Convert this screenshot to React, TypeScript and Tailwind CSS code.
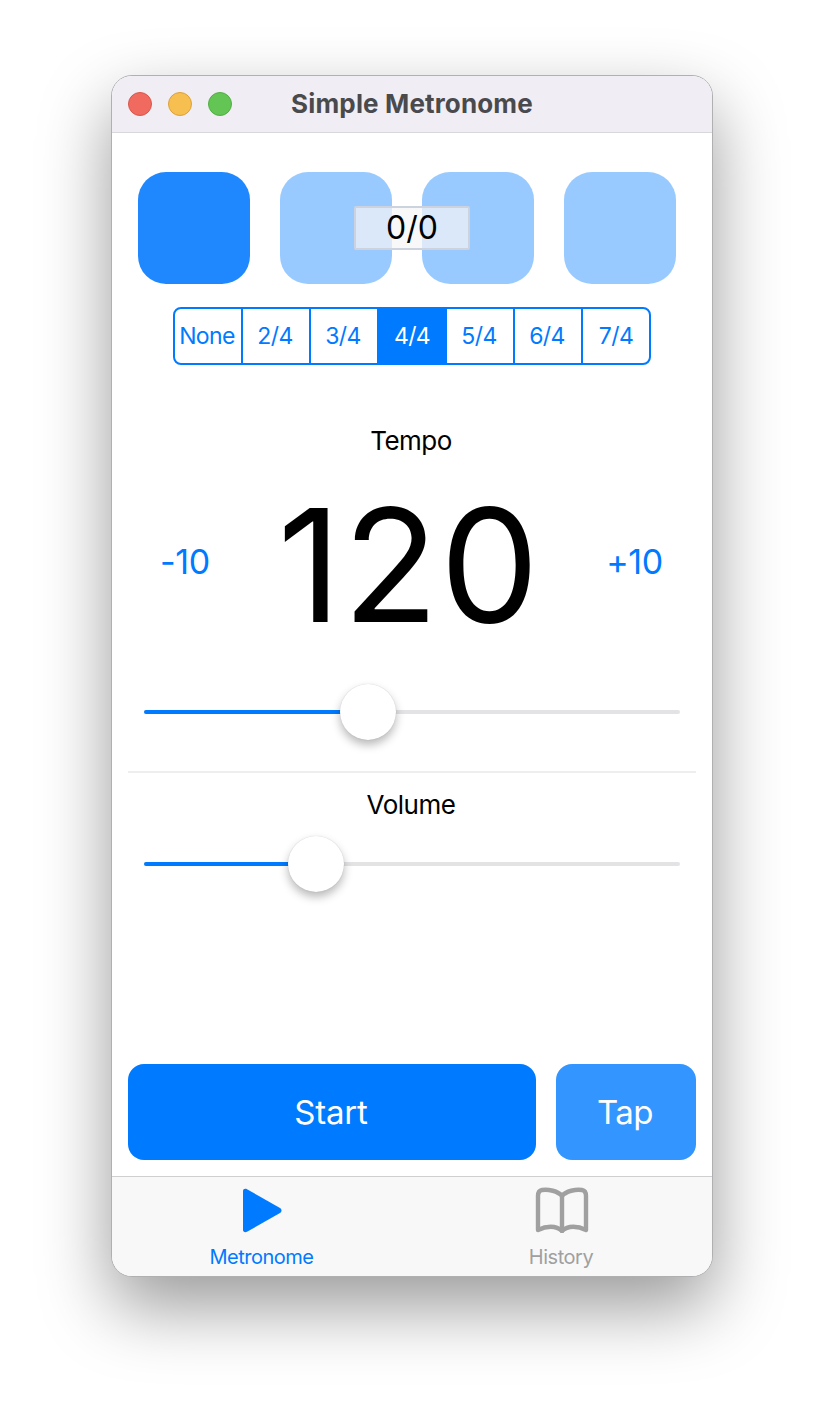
import React from "react";

const font = { fontFamily: 'Inter, "Noto Sans", sans-serif' };

function Slider({ pct, thumb }: { pct: number; thumb: number }) {
  return (
    <div className="relative h-[56px] mx-[32px]">
      <div className="absolute left-0 right-0 top-[26px] h-[4px] rounded-full bg-[#e3e3e5]" />
      <div className="absolute left-0 top-[26px] h-[4px] rounded-l-full bg-[#007aff]" style={{ width: pct }} />
      <div
        className="absolute top-0 w-[56px] h-[56px] rounded-full bg-white shadow-[0_5px_10px_rgba(0,0,0,0.28),0_0_1px_rgba(0,0,0,0.2)]"
        style={{ left: thumb }}
      />
    </div>
  );
}

export default function App() {
  const sigs = ["None", "2/4", "3/4", "4/4", "5/4", "6/4", "7/4"];
  return (
    <div className="w-[824px] h-[1424px] bg-white pt-[75px] pl-[111px] overflow-hidden" style={font}>
      <div className="relative w-[602px] h-[1202px] rounded-[21px] bg-white flex flex-col overflow-hidden border border-[#b0b0b2] shadow-[0_30px_70px_rgba(0,0,0,0.4)]">
        <div className="h-[57px] shrink-0 bg-[#f0eef4] border-b border-[#d8d8da] flex items-center pl-[16px] relative">
          <div className="flex gap-[16px]">
            <div className="w-[24px] h-[24px] rounded-full bg-[#f06a60] border border-[#d9564c]" />
            <div className="w-[24px] h-[24px] rounded-full bg-[#f7bf4f] border border-[#dca03a]" />
            <div className="w-[24px] h-[24px] rounded-full bg-[#62c554] border border-[#52ad45]" />
          </div>
          <div className="absolute inset-x-0 top-0 bottom-[2px] flex items-center justify-center text-[26px] tracking-[0.15px] font-bold text-[#4a4a4d]">Simple Metronome</div>
        </div>

        <div className="relative flex-1 flex flex-col">
          <div className="flex gap-[30px] pl-[26px] pt-[39px]">
            <div className="w-[112px] h-[112px] rounded-[28px] bg-[#2088ff]" />
            <div className="w-[112px] h-[112px] rounded-[28px] bg-[#99caff]" />
            <div className="w-[112px] h-[112px] rounded-[28px] bg-[#99caff]" />
            <div className="w-[112px] h-[112px] rounded-[28px] bg-[#99caff]" />
          </div>

          <div className="absolute left-[242px] top-[73px] w-[116px] h-[44px] bg-[#f5f5f7]/70 border-2 border-[#cdd3de] rounded-[2px] flex items-center justify-center text-[32px] text-black">
            0/0
          </div>

          <div className="self-center flex mt-[23px] w-[478px] h-[58px] border-2 border-[#007aff] rounded-[8px] overflow-hidden text-[23px] tracking-[-0.6px]">
            {sigs.map((s, i) => (
              <div
                key={s}
                className={
                  i === 3
                    ? "w-[68px] shrink-0 flex items-center justify-center pr-[2px] bg-[#007aff] text-white"
                    : i === 6
                      ? "w-[66px] shrink-0 flex items-center justify-center text-[#007aff]"
                      : "w-[68px] shrink-0 flex items-center justify-center pr-[2px] text-[#007aff] border-r-2 border-[#007aff]"
                }
              >
                {s}
              </div>
            ))}
          </div>

          <div className="text-center text-[26px] leading-[32px] tracking-[-0.5px] text-black mt-[60px] pr-[2px]">Tempo</div>

          <div className="relative h-[180px] mt-[14px] flex items-center justify-center">
            <div className="absolute left-[48px] text-[34px] tracking-[-0.3px] text-[#007aff]">-10</div>
            <div className="text-[157px] leading-[180px] text-black tracking-[1.5px] pt-[8px] pr-[6px]">120</div>
            <div className="absolute right-[49px] text-[34px] tracking-[-0.3px] text-[#007aff]">+10</div>
          </div>

          <div className="mt-[33px]">
            <Slider pct={200} thumb={196} />
          </div>

          <div className="h-[2px] bg-[#eeeeee] mx-[16px] mt-[31px]" />

          <div className="text-center text-[26px] leading-[32px] tracking-[-0.5px] text-black mt-[16px] pr-[2px]">Volume</div>

          <div className="mt-[15px]">
            <Slider pct={148} thumb={144} />
          </div>

          <div className="mt-auto mb-[16px] flex gap-[20px] px-[16px]">
            <div className="w-[408px] h-[96px] rounded-[16px] bg-[#007aff] flex items-center justify-center text-[33px] tracking-[-0.2px] text-white pr-[2px] pt-[1px]">Start</div>
            <div className="w-[140px] h-[96px] rounded-[16px] bg-[#3395ff] flex items-center justify-center text-[33px] tracking-[-0.6px] text-white pr-[2px] pt-[1px]">Tap</div>
          </div>
        </div>

        <div className="h-[100px] shrink-0 bg-[#f8f8f9] border-t border-[#cfcfd1] flex">
          <div className="w-[299px] flex flex-col items-center pt-[10px]">
            <svg width="44" height="46" viewBox="0 0 44 46">
              <path d="M3 4 C3 2 5 1.3 7 2.2 L40 21 C42 22.3 42 24.7 40 26 L7 44.8 C5 45.6 3 45 3 43 Z" fill="#007aff" />
            </svg>
            <div className="text-[20px] leading-[24px] tracking-[-0.5px] text-[#007aff] mt-[12px]">Metronome</div>
          </div>
          <div className="flex-1 flex flex-col items-center pt-[10px]">
            <svg width="56" height="46" viewBox="0 0 56 46" fill="none" stroke="#a0a0a0" strokeWidth="4.4" strokeLinejoin="round" strokeLinecap="round">
              <path d="M28 9 C24 4 14 2 8 3 C5 3.5 4 6 4 9 V43 C12 39 22 38 28 44 C34 38 44 39 52 43 V9 C52 6 51 3.5 48 3 C42 2 32 4 28 9 Z" />
              <path d="M28 9 V44" />
            </svg>
            <div className="text-[20px] leading-[24px] tracking-[-0.45px] text-[#a0a0a0] mt-[12px] pr-[1px]">History</div>
          </div>
        </div>
      </div>
    </div>
  );
}
